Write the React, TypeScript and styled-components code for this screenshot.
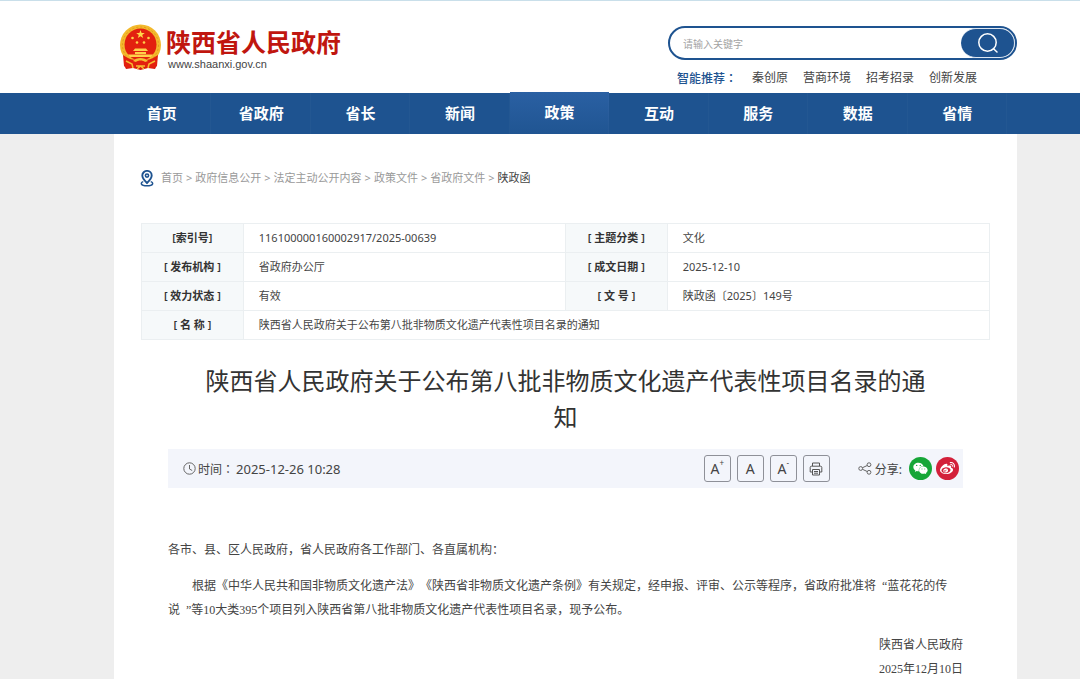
import React from 'react';
import styled, { createGlobalStyle } from 'styled-components';
import { FaWeibo, FaWeixin } from 'react-icons/fa';

const BLUE = '#1e5390';

const GlobalStyle = createGlobalStyle`
  * { box-sizing: border-box; }
  body {
    margin: 0;
    background: #eeeeee;
    color: #444;
    font-family: 'Noto Sans', 'Noto Sans CJK SC', sans-serif;
    font-size: 12px;
    text-spacing-trim: space-all;
  }
  a { color: inherit; text-decoration: none; }
`;

const Page = styled.div`
  display: flex;
  flex-direction: column;
  min-height: 100vh;
`;

const Header = styled.header`
  display: flex;
  justify-content: space-between;
  align-items: flex-start;
  height: 93px;
  padding: 0 63px 0 119px;
  background: #fff;
  border-top: 1px solid #c9dfea;
`;

const Logo = styled.a`
  display: flex;
  gap: 4px;
  padding-top: 23px;
`;

const LogoText = styled.span`
  display: flex;
  flex-direction: column;
`;

const LogoName = styled.span`
  color: #c0160f;
  font-family: 'Noto Sans CJK SC', sans-serif;
  font-size: 25px;
  font-weight: 700;
  line-height: 35px;
`;

const LogoUrl = styled.span`
  padding-left: 2px;
  color: #444;
  font-family: 'Liberation Sans', sans-serif;
  font-size: 11px;
  line-height: 10px;
`;

const SearchArea = styled.div`
  width: 349px;
  padding-top: 25px;
`;

const SearchForm = styled.form`
  display: flex;
  height: 34px;
  border: 2px solid ${BLUE};
  border-radius: 17px;
  overflow: hidden;
  background: #fff;
`;

const SearchInput = styled.input`
  flex: 1;
  min-width: 0;
  padding: 0 13px;
  border: 0;
  outline: 0;
  background: transparent;
  font-family: 'Noto Sans CJK SC', sans-serif;
  font-size: 10px;
  &::placeholder { color: #a3a3a3; opacity: 1; }
`;

const SearchButton = styled.button`
  display: flex;
  align-items: center;
  justify-content: center;
  width: 54px;
  padding: 0;
  border: 1px solid #dfe8f2;
  border-left: 0;
  border-radius: 15px;
  background: ${BLUE};
`;

const Suggestions = styled.div`
  display: flex;
  gap: 15px;
  padding: 8px 0 0 9px;
  line-height: 20px;
`;

const SuggestionLabel = styled.span`
  color: ${BLUE};
  font-family: 'Noto Sans CJK TC', sans-serif;
  font-weight: 500;
`;

const Nav = styled.nav`
  display: flex;
  height: 41px;
  padding: 0 73px 0 112px;
  background: ${BLUE};
`;

const NavItem = styled.a<{ $active?: boolean }>`
  flex: 1;
  margin-top: ${(p) => (p.$active ? '-1px' : '0')};
  color: #fff;
  background: ${(p) => (p.$active ? 'linear-gradient(#2a60a3, #205592)' : 'transparent')};
  box-shadow: inset -1px 0 #ffffff06;
  font-family: 'Noto Sans CJK SC', sans-serif;
  font-size: 15px;
  font-weight: 700;
  line-height: 40px;
  text-align: center;
`;

const Main = styled.main`
  flex: 1;
  margin: 0 63px 0 114px;
  padding: 34px 27px 0;
  background: #fff;
`;

const Breadcrumb = styled.nav`
  display: flex;
  align-items: center;
  gap: 3px;
  height: 20px;
  color: #999;
  font-size: 11px;
  line-height: 16px;
  svg {
    margin: 0 4px 0 -1px;
  }
`;

const Current = styled.span`
  color: #444;
`;

const InfoTable = styled.table`
  width: 100%;
  margin-top: 35px;
  border-collapse: collapse;
  table-layout: fixed;
  font-size: 11px;
  line-height: 16px;
  th, td {
    height: 29px;
    padding: 0;
    border: 1px solid #ebeff1;
  }
  th {
    background: #f6f9fa;
    color: #333;
    font-weight: 600;
  }
  td {
    padding-left: 15px;
  }
`;

const LabelCol = styled.col`
  width: 12%;
`;

const ValueCol = styled.col`
  width: 38%;
`;

const Article = styled.article`
  margin: 22px 27px 0;
`;

const Title = styled.h1`
  margin: 0;
  padding: 0 32px;
  color: #333;
  font-family: 'Noto Sans CJK SC', sans-serif;
  font-size: 24px;
  font-weight: 400;
  line-height: 36px;
  text-align: center;
`;

const Toolbar = styled.div`
  display: flex;
  align-items: center;
  height: 39px;
  margin-top: 15px;
  padding: 0 4px 0 15px;
  background: #f3f5fb;
`;

const Time = styled.span`
  display: flex;
  align-items: center;
  gap: 2px;
  margin-right: auto;
`;

const TimeLabel = styled.span`
  font-family: 'Noto Sans CJK TC', sans-serif;
`;

const TimeValue = styled.time`
  font-size: 13px;
`;

const Tools = styled.div`
  display: flex;
  gap: 6px;
`;

const ToolButton = styled.button`
  display: flex;
  align-items: center;
  justify-content: center;
  width: 27px;
  height: 27px;
  padding: 0;
  border: 1px solid #8e9098;
  border-radius: 3px;
  background: transparent;
  color: #444;
  font-family: 'Noto Sans', sans-serif;
  font-size: 14px;
  line-height: 16px;
  sup {
    align-self: flex-start;
    font-size: 8px;
    line-height: 14px;
  }
`;

const Share = styled.div`
  display: flex;
  align-items: center;
  gap: 4px;
  margin-left: 28px;
`;

const ShareLabel = styled.span`
  display: flex;
  align-items: center;
  gap: 3px;
  margin-right: 3px;
`;

const ShareButton = styled.button<{ $color: string }>`
  display: flex;
  align-items: center;
  justify-content: center;
  width: 23px;
  height: 23px;
  padding: 0;
  border: 0;
  border-radius: 50%;
  background: ${(p) => p.$color};
  color: #fff;
  font-size: 15px;
`;

const Body = styled.div`
  padding-top: 50px;
  font-family: 'Liberation Serif', 'Noto Sans CJK SC', serif;
  line-height: 24px;
  p { margin: 0 0 12px; }
`;

const Indented = styled.p`
  text-indent: 24px;
`;

const Quote = styled.span`
  padding-left: 6px;
`;

const Signature = styled.div`
  margin-top: -1px;
  text-align: right;
`;

const Emblem = () => (
  <svg width="43" height="47" viewBox="0 0 43 47" aria-hidden="true">
    <path d="M6 32h31l1 9-2 4-7-1-7.500 2-7.500-2-7 1-2-4z" fill="#d8190f" />
    <circle cx="21.500" cy="21" r="20.500" fill="#f3b92c" />
    <circle cx="21.500" cy="21" r="18" fill="none" stroke="#e09a20" strokeWidth="1" strokeDasharray="2 2" />
    <circle cx="21.500" cy="20.500" r="16" fill="#e3200f" />
    <path d="M21.500 6l1.100 3h3.200l-2.600 2 1 3.100-2.700-1.900-2.700 1.900 1-3.100-2.600-2h3.200z" fill="#ffd84a" />
    <g fill="#ffd04a">
      <circle cx="13.500" cy="14" r="1.300" />
      <circle cx="29.500" cy="14" r="1.300" />
      <circle cx="18" cy="18.500" r="1.300" />
      <circle cx="25" cy="18.500" r="1.300" />
      <path d="M16 24.500h11l2 2.500H14zM16 28h11v2H16zM9 30.500h25l-2 2.500H11z" />
    </g>
    <path d="M4 31c5 3 9 6 13 4l4.500 1 4.500-1c4 2 8-1 13-4l-1 11c-4 3-8 2-12 1l-4.500-1-4.500 1c-4 1-8 2-12-1z" fill="#e3200f" />
    <path d="M14 37c3-4 12-4 15 0l-3 1c-2-2-7-2-9 0z" fill="#f5bd33" />
    <path d="M7 37l6 3 1 4M36 37l-6 3-1 4M17 42h9M18 45l3.500-3 3.500 3" fill="none" stroke="#f5bd33" strokeWidth="1.500" />
  </svg>
);

const PinIcon = () => (
  <svg width="14" height="17" viewBox="0 0 14 17" fill="none" stroke={BLUE} aria-hidden="true">
    <path d="M7 13C4.300 10.500 2.300 8.200 2.300 5.600a4.700 4.700 0 0 1 9.400 0C11.700 8.200 9.700 10.500 7 13z" strokeWidth="1.900" />
    <circle cx="7" cy="5.600" r="1.600" strokeWidth="1.600" />
    <path d="M3.300 11.600C.200 12.600.300 15.700 7 15.700s6.800-3.100 3.700-4.100" strokeWidth="1.500" />
  </svg>
);

const SearchIcon = () => (
  <svg width="22" height="22" viewBox="0 0 22 22" fill="none" stroke="#fff" strokeWidth="1.500" strokeLinecap="round" aria-hidden="true">
    <circle cx="10.500" cy="10.500" r="8.700" />
    <path d="M16.800 17l3.200 3" />
  </svg>
);

const ClockIcon = () => (
  <svg width="13" height="13" viewBox="0 0 13 13" fill="none" stroke="#666" aria-hidden="true">
    <circle cx="6.500" cy="6.500" r="5.700" />
    <path d="M6.500 3v4l2.700 1.500" />
  </svg>
);

const PrintIcon = () => (
  <svg width="14" height="14" viewBox="0 0 14 14" fill="none" stroke="#555" aria-hidden="true">
    <path d="M3.500 4V1h7v3M3.500 10H1.200V5.500Q1.200 4.200 2.500 4.200h9q1.300 0 1.300 1.300V10h-2.300M3.500 7.500h7V13h-7zM5 9.500h4M5 11.200h4" />
  </svg>
);

const ShareIcon = () => (
  <svg width="14" height="13" viewBox="0 0 14 13" fill="none" stroke="#666" aria-hidden="true">
    <circle cx="2.700" cy="6.500" r="1.900" />
    <circle cx="11" cy="2.700" r="1.900" />
    <circle cx="11" cy="10.300" r="1.900" />
    <path d="M4.500 5.700l4.700-2.200M4.500 7.300l4.700 2.200" />
  </svg>
);

const navItems = ['首页', '省政府', '省长', '新闻', '政策', '互动', '服务', '数据', '省情'];
const suggestions = ['秦创原', '营商环境', '招考招录', '创新发展'];
const crumbs = ['首页', '政府信息公开', '法定主动公开内容', '政策文件', '省政府文件'];
const infoRows = [
  ['[索引号]', '116100000160002917/2025-00639', '[ 主题分类 ]', '文化'],
  ['[ 发布机构 ]', '省政府办公厅', '[ 成文日期 ]', '2025-12-10'],
  ['[ 效力状态 ]', '有效', '[ 文 号 ]', '陕政函〔2025〕149号'],
];

export default function App() {
  return (
    <Page lang="zh-CN">
      <GlobalStyle />
      <Header>
        <Logo href="#">
          <Emblem />
          <LogoText>
            <LogoName>陕西省人民政府</LogoName>
            <LogoUrl>www.shaanxi.gov.cn</LogoUrl>
          </LogoText>
        </Logo>
        <SearchArea>
          <SearchForm>
            <SearchInput type="text" placeholder="请输入关键字" aria-label="请输入关键字" />
            <SearchButton type="submit" aria-label="搜索">
              <SearchIcon />
            </SearchButton>
          </SearchForm>
          <Suggestions>
            <SuggestionLabel lang="zh-TW">智能推荐：</SuggestionLabel>
            {suggestions.map((s) => (
              <a href="#" key={s}>{s}</a>
            ))}
          </Suggestions>
        </SearchArea>
      </Header>
      <Nav>
        {navItems.map((item) => (
          <NavItem href="#" key={item} $active={item === '政策'}>{item}</NavItem>
        ))}
      </Nav>
      <Main>
        <Breadcrumb>
          <PinIcon />
          {crumbs.map((c) => (
            <React.Fragment key={c}>
              <a href="#">{c}</a>
              <span>&gt;</span>
            </React.Fragment>
          ))}
          <Current>陕政函</Current>
        </Breadcrumb>
        <InfoTable>
          <colgroup>
            <LabelCol />
            <ValueCol />
            <LabelCol />
            <ValueCol />
          </colgroup>
          <tbody>
            {infoRows.map(([k1, v1, k2, v2]) => (
              <tr key={k1}>
                <th scope="row">{k1}</th>
                <td>{v1}</td>
                <th scope="row">{k2}</th>
                <td>{v2}</td>
              </tr>
            ))}
            <tr>
              <th scope="row">[ 名 称 ]</th>
              <td colSpan={3}>陕西省人民政府关于公布第八批非物质文化遗产代表性项目名录的通知</td>
            </tr>
          </tbody>
        </InfoTable>
        <Article>
          <Title>陕西省人民政府关于公布第八批非物质文化遗产代表性项目名录的通知</Title>
          <Toolbar>
            <Time>
              <ClockIcon />
              <TimeLabel lang="zh-TW">时间：</TimeLabel>
              <TimeValue>2025-12-26 10:28</TimeValue>
            </Time>
            <Tools>
              <ToolButton type="button">A<sup>+</sup></ToolButton>
              <ToolButton type="button">A</ToolButton>
              <ToolButton type="button">A<sup>-</sup></ToolButton>
              <ToolButton type="button" aria-label="打印"><PrintIcon /></ToolButton>
            </Tools>
            <Share>
              <ShareLabel><ShareIcon />分享:</ShareLabel>
              <ShareButton type="button" $color="#16a637" aria-label="微信"><FaWeixin /></ShareButton>
              <ShareButton type="button" $color="#d3203a" aria-label="微博"><FaWeibo /></ShareButton>
            </Share>
          </Toolbar>
          <Body>
            <p>各市、县、区人民政府，省人民政府各工作部门、各直属机构：</p>
            <Indented>
              根据《中华人民共和国非物质文化遗产法》《陕西省非物质文化遗产条例》有关规定，经申报、评审、公示等程序，省政府批准将<Quote>“</Quote>蓝花花的传说<Quote>”</Quote>等10大类395个项目列入陕西省第八批非物质文化遗产代表性项目名录，现予公布。
            </Indented>
            <Signature>
              <div>陕西省人民政府</div>
              <div>2025年12月10日</div>
            </Signature>
          </Body>
        </Article>
      </Main>
    </Page>
  );
}
